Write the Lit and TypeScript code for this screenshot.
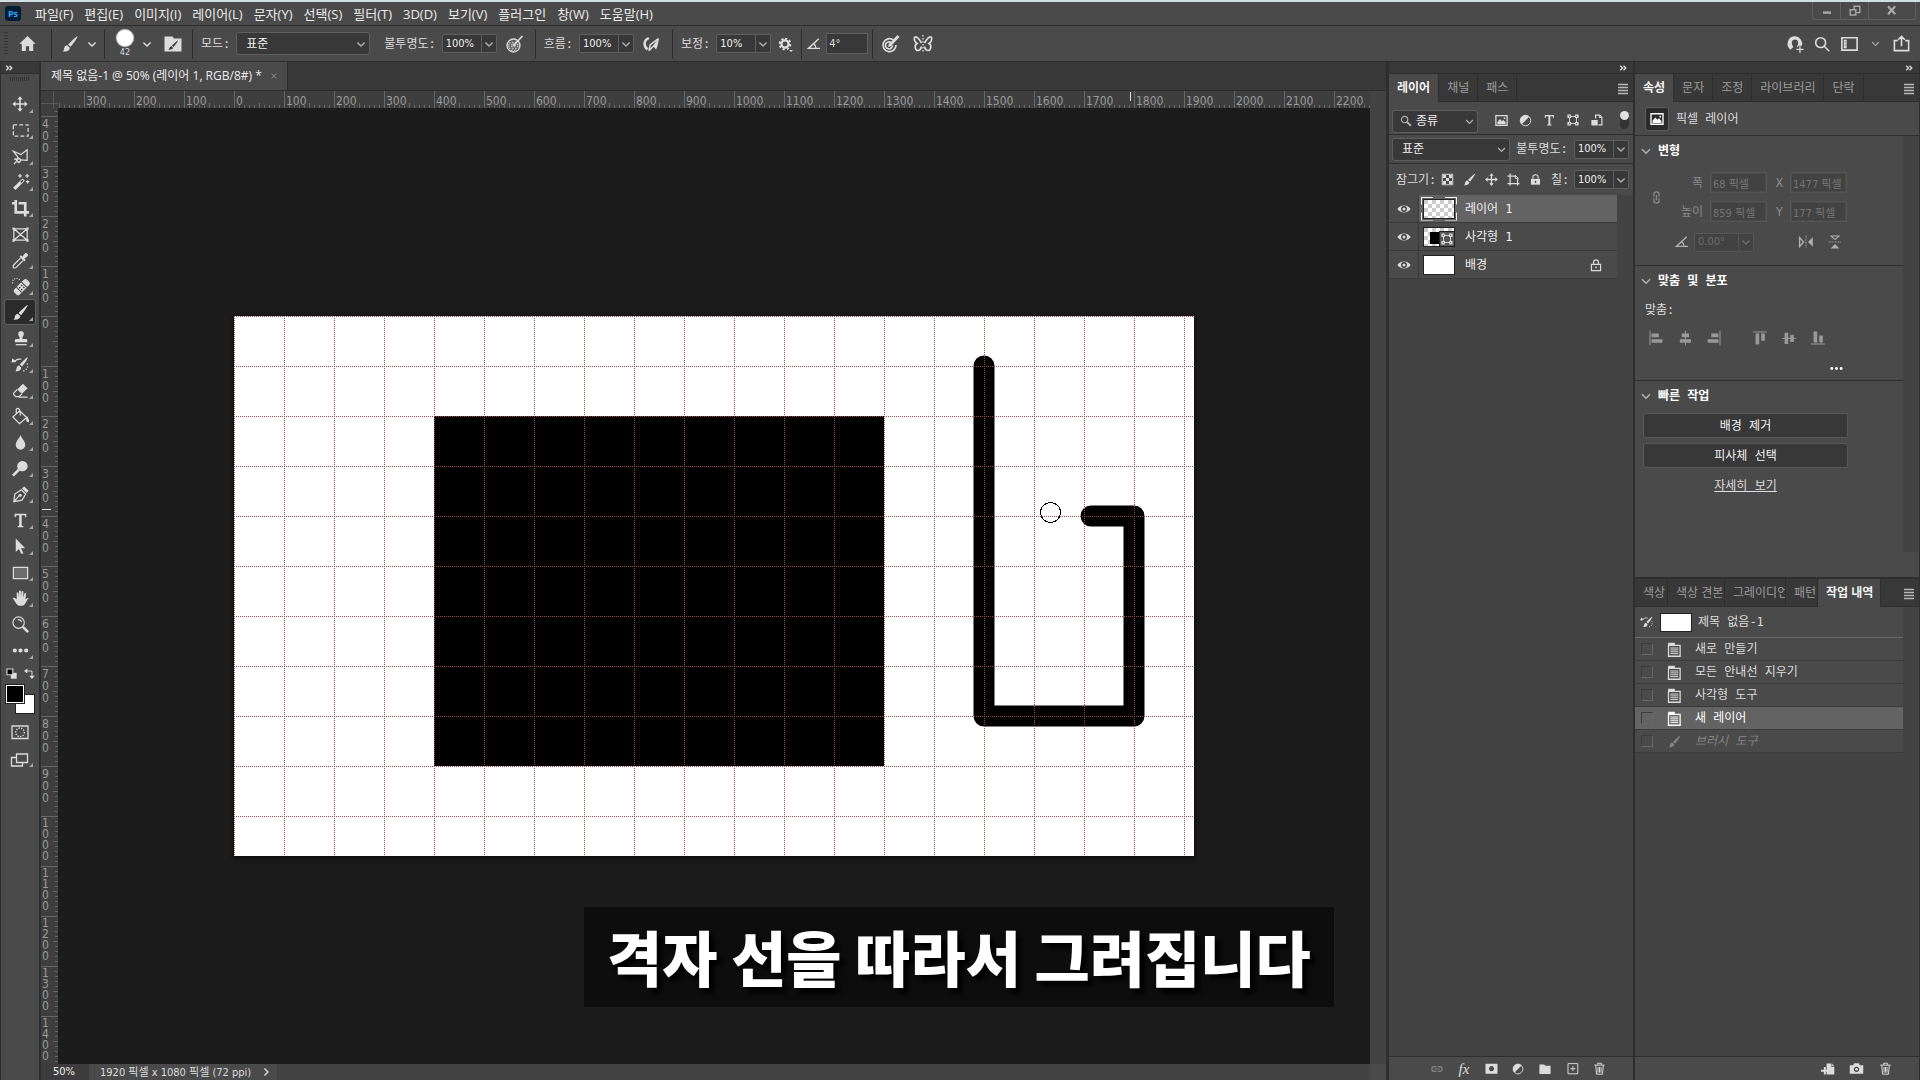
import { LitElement, html, svg, css, nothing, type TemplateResult } from "lit";
import { customElement } from "lit/decorators.js";
import { classMap } from "lit/directives/class-map.js";

/* ---------- icons (20 × 20 grid) ---------- */

const brush = svg`<path d="M17.5 2.2c.6.5-4.6 8.3-7 10.6L8 10.600C10.200 8.200 17 1.700 17.500 2.200z"/><path d="M7.200 11.300l2.500 2.400c.2 2.400-2.400 4.300-7.200 3.800 1.500-.9 1.300-2 1.700-3.600.4-1.600 1.700-2.500 3-2.600z"/>`;
const trash = svg`<path class="l" d="M3 5.500h14M7.500 5V3h5v2M5 6l1 11.500h8L15 6M8 8v7.500M10 8v7.500M12 8v7.500"/>`;
const half = svg`<circle class="l" cx="10" cy="10" r="7"/><path d="M15 5A7 7 0 1 0 5 15z"/>`;
const frame = svg`<path class="l" d="M5 5h10v10H5z"/><path d="M2 2h5v5H2zM13 2h5v5h-5zM2 13h5v5H2zM13 13h5v5h-5z"/><path class="k" d="M4 4h1.500v1.500H4zM14.500 4H16v1.500h-1.500zM4 14.500h1.500V16H4zM14.500 14.500H16V16h-1.500z"/>`;
const picture = svg`<path class="l t" d="M2.500 3.500h15v13h-15z"/><path d="M4.500 15v-3l3.500-4 2.500 3 2-2 3 3.500V15z"/><path d="M13 6h2v2h-2z"/>`;
const angle = svg`<path class="l t" d="M16 3.500L3 15.500h14.500M9.500 9.500c2 1.500 3 3.500 3 6"/>`;

const ICONS: Record<string, TemplateResult> = {
  chev: svg`<path class="l t" d="M5.500 8l4.500 4.500L14.500 8"/>`,
  expand: svg`<path class="l g" d="M4.500 5.500L9 10l-4.500 4.500M11 5.500l4.500 4.500-4.500 4.500"/>`,
  menu: svg`<path class="l" d="M5 6.500h10M5 9.500h10M5 12.500h10M5 15.500h10"/>`,
  home: svg`<path d="M10 2L1.500 10.200H4V18h4.300v-5h3.400v5H16v-7.800h2.500z"/>`,
  brush,
  brushpanel: svg`<path d="M1.500 2.500h8l1.500 2h7.500v13h-17z"/><path class="k" d="M15 6.500c.4.300-2.900 5-4.500 6.500L9 11.700C10.400 10.200 14.700 6.200 15 6.500zM8.500 12.200l1.500 1.400c0 1.600-2 2.500-4.500 2.200 1.300-1.300.7-3.300 3-3.600z"/>`,
  pressop: svg`<circle class="l f" cx="8.500" cy="11.500" r="6.500"/><path class="l c" stroke-dasharray="1.500 1.500" d="M4 8.500h9M3 10.500h11M3 12.500h11M4 14.500h9M6 16.500h5"/><path class="l t" d="M9.500 10.500l8-8.500"/><path d="M7.500 12.500l1-3.500 2.500 2.500z"/>`,
  airbrush: svg`<path class="l g" d="M6.500 3.500C.5 5.500.5 13 5 16"/><path d="M18 3l-7 9 3.500 4c2-3.500 2.500-8 3.500-13z"/><path class="l t" d="M12 12l-5.500 5.500M17 4L8 11l-1.500 6.500"/>`,
  gear: svg`<path class="l g" stroke-dasharray="2.700 2.410" d="M10 3.500a6.500 6.500 0 1 1-.01 0"/><circle class="l g" cx="10" cy="10" r="4.500"/><path d="M15 17.500h5L17.500 20z"/>`,
  angle,
  target: svg`<path class="l t" d="M12.500 6A6.500 6.500 0 1 0 15 11M10 8.500a3.500 3.500 0 1 0 1.500 3"/><path class="l g" d="M9 11l8.500-9"/><path d="M7 13l1-4 3 3z"/>`,
  butterfly: svg`<path class="l" stroke-dasharray="1.500 1.500" d="M10 1v18"/><path class="l t" d="M8.500 9C6 4 3 2 1.500 3.500c-.5 2.500 1 5 2.500 6C1 11 2 16.500 5 16.500c2 0 3-2 3.500-4M11.500 9c2.500-5 5.500-7 7-5.500.5 2.500-1 5-2.500 6 3 1.500 2 7-1 7-2 0-3-2-3.500-4"/>`,
  user: svg`<path d="M10 1.500a8.300 8.300 0 0 0-5 14.900l2.700-2.400c.6-.5.300-1.300-.2-1.900C5.500 9 6.500 5 10 5s4.500 4 2.500 7.100c-.5.600-.8 1.200-.2 1.900L14 12h3.700A8.300 8.300 0 0 0 10 1.500z"/><path class="l" d="M15.500 12v8M11.500 16h8"/>`,
  search: svg`<circle class="l t" cx="8.500" cy="8.500" r="5.500"/><path class="l t" d="M12.500 12.500L18 18"/>`,
  searchb: svg`<circle class="l t" cx="8" cy="8" r="4.500"/><path class="l g" d="M11 11l6 6"/>`,
  workspace: svg`<path class="l t" d="M2 4h16v13H2z"/><path d="M4 6h3v9H4z"/><path class="k" d="M5 8h1v1H5zM5 11h1v1H5z"/>`,
  share: svg`<path class="l t" d="M6 7H2.500v10.500h15V7H14M10 13V2.500M6.500 6L10 2.500 13.500 6"/>`,
  min: svg`<path d="M5 10.500h10v3H5z"/>`,
  restore: svg`<path class="l t" d="M9 8V4h7v8h-4M4 8.500h7V15H4z"/>`,
  close: svg`<path class="l g" d="M5 4l9 10M14 4L5 14"/>`,
  x: svg`<path class="l t" d="M4 4l12 12M16 4L4 16"/>`,
  move: svg`<path class="l t" d="M10 4v12M4 10h12"/><path d="M10 1.500l3 3.500H7zM10 18.500l3-3.500H7zM1.500 10L5 7v6zM18.500 10L15 7v6z"/>`,
  marquee: svg`<path class="l" stroke-dasharray="4 2.300" d="M2.500 4h15.500v12H2.500z"/>`,
  lasso: svg`<path class="l" d="M8.500 12.500L2.500 4.500l8 3.500 6.500-5v11l-7-.5M9 12.500l-5.500.5M3 18l2.500-2.500M9 17l-5-5"/><circle class="l" cx="8" cy="14" r="2"/>`,
  wand: svg`<path d="M2.200 15.500L12 5.700l2.500 2.500L4.700 18z"/><path class="k" d="M9.800 9.300l2.200-2.200 1.100 1.100-2.200 2.200z"/><path class="l" d="M9.500 1v4M7.500 3h4M17 1v4M15 3h4M17.500 7.500v3.500M15.700 9.200h3.500"/>`,
  crop: svg`<path class="l g" d="M5 1v13h10M1 4.500h3M8 4.500h7v14M15.500 14H19"/>`,
  frametool: svg`<path class="l" d="M3 4h14v12H3zM3 4l14 12M17 4L3 16"/><path d="M1.500 2.500h2.500v2.500H1.500zM16 2.500h2.500v2.500H16zM1.500 15h2.500v2.500H1.500zM16 15h2.500v2.500H16z"/>`,
  eyedrop: svg`<path d="M9 6l1.500-1.500L12 6l2.500-3.500c1.500-1.500 4.500 1 3 3L14 8l1.500 1.500L14 11z"/><path class="l" d="M10 7.500L3 14.500c-.8.800-.8 2.800-.5 3.200.4.300 2.200.3 3-.5l7-7"/>`,
  heal: svg`<g transform="rotate(-45 11 11)"><rect x="2" y="7" width="19" height="8" rx="2.500"/><path class="k" d="M7 7h1v8H7zM14.500 7h1v8h-1zM9 9h1.500v1.500H9zM12 9h1.500v1.500H12zM9 12h1.500v1.500H9zM12 12h1.500v1.500H12z"/></g><path class="l" stroke-dasharray="1 1.500" d="M9 3a4 4 0 1 0-6.500 5"/>`,
  stamp: svg`<path d="M10.500 2a3.200 3.200 0 0 1 2.500 5c-1 1.300-1 2-.9 3.500H16c1 0 1.200 1 1.200 3.500H4c0-2.500.2-3.500 1.200-3.500H9c.1-1.500.1-2.200-.9-3.500A3.200 3.200 0 0 1 10.500 2z"/><path class="l" d="M5 16.500h11.500"/>`,
  histbrush: svg`<path d="M17.500 2.500c.6.5-3.600 7.300-6 9.600L9.300 10C11.500 7.500 17 2 17.500 2.500zM8.500 11l2.300 2.200c.2 2.400-2 4.300-6.300 3.800 2-2 1-5.700 4-6z"/><path class="l" d="M3 7.500c3-4 6-3.500 8-3"/><path d="M.5 8l1-4.500 4 3.500z"/><path class="l" stroke-dasharray="1.300 1.700" d="M17 9c1.500 3 0 7-4.500 8"/>`,
  eraser: svg`<path d="M12.500 3l5 4.500-6 6L6.500 9z"/><path class="l" d="M6.500 9L3 12.500c-1 1 0 2 .5 2.500l1.500 1.500h3.500l3-3"/><path class="l" d="M8 17h9.500"/>`,
  bucket: svg`<path class="l" d="M9 4l7.500 7L9 17.500 2 10.500zM5.500 7.500V3c0-2 3-2 3.500 0l1 6"/><path d="M17 10c2 2.500 3 6 1 6s-3-3-1-6z"/>`,
  blur: svg`<path d="M10 2c1.500 4 5 6.500 5 10.500a5 5 0 0 1-10 0C5 8.500 8.500 6 10 2z"/>`,
  dodge: svg`<circle cx="12" cy="7.500" r="5.500"/><path class="l g" d="M2 17.500L8.500 11"/>`,
  pen: svg`<path class="l" d="M3 17.500l1-8L11 5l4.500 4.500-4 6.500zM3 17.500l6-6.500"/><circle cx="9.700" cy="10.700" r="1.600"/><path d="M11.500 3.500L14 1.500l4.500 4.500-2 2.500z"/>`,
  type: svg`<path d="M4 3h13v4h-1.200c0-1.600-.6-2.200-2.300-2.200h-1.600v10.400c0 1 .4 1.300 1.800 1.400V18H7.300v-1.400c1.400-.1 1.800-.4 1.800-1.400V4.800H7.500C5.800 4.800 5.200 5.400 5.200 7H4z"/>`,
  arrow: svg`<path d="M5 1.500v14.300l3.400-3.300 2.400 5.500 2.200-1-2.400-5.200H15z"/>`,
  rect: svg`<path class="l d" d="M2.500 4.500h15v12h-15z"/>`,
  hand: svg`<path d="M6 11V4.500c0-1.300 1.700-1.300 1.900 0L8.500 9V2.500c0-1.400 2-1.400 2 0V9L11 3c.2-1.300 2-1.200 2 .2V9.500l1-4.500c.4-1.200 2-.8 1.800.5C15.500 8 15.700 9 15 11c1-1 2.300-2 3.500-1.500-1.500 2-2.500 4.500-4 6.500-1.500 2-6.500 2.500-8.500 0C4.500 14 3 11.500 1.800 9.500 3.500 8.800 5 10 6 11z"/>`,
  zoom: svg`<circle class="l" cx="8" cy="8" r="6"/><path class="l" d="M7 5c2-.5 3.500.5 4 2.500"/><path class="l g" d="M12.500 12.500L18 18"/>`,
  dots: svg`<circle cx="4" cy="10" r="2.200"/><circle cx="10" cy="10" r="2.200"/><circle cx="16" cy="10" r="2.200"/>`,
  dotss: svg`<circle cx="4.500" cy="10" r="1.700"/><circle cx="10" cy="10" r="1.700"/><circle cx="15.500" cy="10" r="1.700"/>`,
  reset: svg`<path d="M9 9h9v9H9z"/><path class="l t b" d="M3 3h9v9H3z"/>`,
  swap: svg`<path class="l t" d="M5 5.500h9.500V15"/><path d="M0 5.500L6 1v9zM14.500 20L9.500 14h10z"/>`,
  mask: svg`<path class="l" d="M2 4h16v12.500H2z"/><circle class="l" stroke-dasharray="1.300 1.300" cx="10" cy="10.300" r="4.300"/>`,
  screen: svg`<path class="l" d="M6.500 9.500H1.500v8.500h11v-3"/><path class="l" d="M6.500 6h11v8.500h-11z"/>`,
  picture,
  half,
  frame,
  smart: svg`<path class="l t" d="M8 8V3h6l3 3v11h-5"/><path d="M2 10h9v8H2zM13 3l4 4h-4z"/>`,
  checker: svg`<path class="l" d="M3 3h14v14H3z"/><path d="M4 4h4v4H4zM12 4h4v4h-4zM8 8h4v4H8zM4 12h4v4H4zM12 12h4v4h-4z"/>`,
  artboard: svg`<path class="l t" d="M5.500 2v16M2 5.500h11M2 15.500h16M15.500 9v9"/><path class="l" d="M12.500 4.500l4 4h-4z"/>`,
  lock: svg`<path d="M3 9h14v9H3z"/><path class="l t" d="M6 9V6c0-4.500 8-4.500 8 0v3"/><path class="k" d="M9 12h2v3H9z"/>`,
  lockl: svg`<path class="l t" d="M3.500 9h13v9h-13zM6.500 9V6c0-4.500 7-4.500 7 0v3"/><path d="M9 12h2v2.500H9z"/>`,
  eye: svg`<path d="M.5 10C5 3.500 15 3.500 19.500 10 15 16.500 5 16.500.5 10z"/><circle class="k" cx="10" cy="10" r="4.200"/><circle cx="10" cy="10" r="2.200"/>`,
  link: svg`<path class="l t" d="M9 6.500H6c-4.500 0-4.500 7 0 7h3M11 6.500h3c4.500 0 4.500 7 0 7h-3M6.500 10h7"/>`,
  chain: svg`<path class="l t" d="M6.500 9V6c0-4.500 7-4.500 7 0v3M6.500 11v3c0 4.500 7 4.500 7 0v-3M10 6.500v7"/>`,
  addmask: svg`<path fill-rule="evenodd" d="M2 3.500h16V17H2zM10 6.800a3.400 3.400 0 1 0 .01 0z"/>`,
  folder: svg`<path d="M2 3.500h7l1.500 2H18V17H2z"/>`,
  plus: svg`<path class="l" d="M4 3.500h13v13.500H4zM10.500 7v6.500M7.300 10.300h6.500"/>`,
  trash,
  snapdoc: svg`<path d="M8 2h7v5h4v11H8z"/><path d="M16 2l3 4h-3z"/><path class="l g" d="M0 12.500h11M5.500 7v11"/>`,
  camera: svg`<path fill-rule="evenodd" d="M1 5.500h4.500L7 3h6l1.500 2.500H19V17H1zM10 7.500a3.600 3.600 0 1 0 .01 0z"/><circle cx="10" cy="11" r="1.800"/>`,
  doc: svg`<path d="M1.500 1h9v3.500h-9z"/><path class="l t" d="M2 4.500h15.500V19H2z"/><path class="l" d="M4.500 8h10.500M4.500 10.500h10.500M4.500 13h10.500M4.500 15.500h10.500"/>`,
  fliph: svg`<path class="l t" d="M2 4.500v11l5-5.500z"/><path class="l" stroke-dasharray="1 1" d="M10 2v16"/><path d="M18.500 4v12l-6-6z"/>`,
  flipv: svg`<path class="l" d="M5 2.500h10L10 7z"/><path class="l" stroke-dasharray="1 1" d="M2 10h16"/><path d="M4.500 18h11L10 12.500z"/>`,
  al: svg`<path class="l" d="M2.500 1v18"/><path d="M4.500 4.500h9V9h-9zM4.500 11.500H18V16H4.500z"/>`,
  ac: svg`<path class="l" d="M10.500 1v18"/><path d="M6 4.500h9V9H6zM3.500 11.500h14V16h-14z"/>`,
  ar: svg`<path class="l" d="M17.500 1v18"/><path d="M6.500 4.500h9V9h-9zM2 11.500h13.500V16H2z"/>`,
  at: svg`<path class="l" d="M1.500 2.500h17"/><path d="M4.500 4.500H9V18H4.500zM11.500 4.500H16v9h-4.500z"/>`,
  am: svg`<path class="l" d="M1.500 10.500h17"/><path d="M4.500 3.500H9v14H4.500zM11.500 6H16v9h-4.500z"/>`,
  ab: svg`<path class="l" d="M1.500 17.500h17"/><path d="M4.500 2H9v13.500H4.500zM11.500 7H16v8.500h-4.500z"/>`,
};

const icon = (name: string, size = 20) =>
  html`<svg class="ic" width=${size} height=${size} viewBox="0 0 20 20" aria-hidden="true">${ICONS[name]}</svg>`;

/* ---------- styles used by every element ---------- */

const shared = css`
  :host {
    --bg: #4a4a4a;
    --strip: #383838;
    --well: #434343;
    --edge: #2e2e2e;
    --rim: #5e5e5e;
    --ink: #dcdcdc;
    --dim: #9c9c9c;
    --num: "DejaVu Sans Condensed", "Open Sans", sans-serif;
    --ui: "DejaVu Sans Mono", "Noto Sans CJK KR", monospace;
    --menu: "Open Sans", "Noto Sans CJK KR", sans-serif;
    color: var(--ink);
    font: 12px/16px var(--ui);
  }
  :host, * { box-sizing: border-box; }
  button, input, select { font: inherit; color: inherit; margin: 0; }
  button { background: none; border: 0; padding: 0; display: inline-flex; align-items: center; justify-content: center; }
  .ic { display: block; flex: none; fill: currentColor; overflow: visible; }
  .ic .l { fill: none; stroke: currentColor; stroke-width: 1.3; }
  .ic .t { stroke-width: 1.7; }
  .ic .g { stroke-width: 2.8; }
  .ic .k { fill: #3c3c3c; }
  .ic .d { fill: #6c6c6c; }
  .ic .b { fill: #000; }
  .ic .f { fill: #5f5f5f; }
  .ic .c { stroke: #bbb; }
  .pick { display: grid; align-items: center; height: 23px; }
  .pick > * { grid-area: 1 / 1; }
  .pick select { appearance: none; width: 100%; height: 100%; padding: 0 9px; background: var(--strip); border: 1px solid var(--rim); border-radius: 3px; color: #f0f0f0; }
  .pick .ic { justify-self: end; margin-right: 1px; pointer-events: none; color: #b0b0b0; }
  .combo { display: flex; width: 55px; height: 19px; background: var(--strip); border: 1px solid var(--rim); border-radius: 2px; }
  .combo input { flex: 1; min-width: 0; padding: 0 3px; background: none; border: 0; font: 11px/16px var(--num); color: #f0f0f0; }
  .combo button { width: 15px; border-left: 1px solid var(--rim); color: #b0b0b0; overflow: hidden; }
  .tabs { display: flex; height: 28px; background: var(--strip); border-bottom: 1px solid var(--edge); font: 12px/16px var(--menu); }
  .tab { flex: none; padding: 0 8px; border-right: 1px solid var(--edge); color: var(--dim); overflow: hidden; white-space: nowrap; justify-content: flex-start; }
  .tab.on { background: var(--bg); color: #f4f4f4; font-weight: bold; height: 28px; }
  .more { margin-left: auto; color: #b8b8b8; }
  .expander { display: flex; flex: none; align-items: center; justify-content: flex-end; height: 12px; padding-right: 5px; background: var(--strip); border-bottom: 1px solid var(--edge); }
  .foot { display: flex; align-items: center; height: 24px; margin-top: auto; background: var(--bg); border-top: 1px solid var(--edge); }
`;

const combo = (label: string, value: string) => html`
  <span class="combo"><input aria-label=${label} .value=${value} /><button aria-label="${label} 조절">${icon("chev", 16)}</button></span>`;

const tabs = (names: string[], on: string) => html`
  <div class="tabs" role="tablist">
    ${names.map((n) => html`<button role="tab" aria-selected=${n === on} class=${classMap({ tab: true, on: n === on })}>${n}</button>`)}
    <button class="more" aria-label="패널 메뉴">${icon("menu", 20)}</button>
  </div>`;

/* ---------- menu bar ---------- */

@customElement("ps-menubar")
class PsMenubar extends LitElement {
  static styles = [shared, css`
    :host { display: flex; height: 26px; border-top: 2px solid #cfdfe4; border-bottom: 1px solid var(--edge); background: var(--bg); }
    .logo { align-self: center; width: 16px; height: 15px; margin: 0 14px 0 5px; border-radius: 3px; background: #001d34; color: #31a8ff; font: bold 9px/15px var(--menu); text-align: center; }
    nav { display: flex; align-items: center; gap: 11px; font: 13px/20px var(--menu); color: #ececec; }
    .win { display: flex; margin-left: auto; margin-right: 4px; height: 18px; border: 1px solid var(--rim); border-top: 0; border-radius: 0 0 3px 3px; color: #a8a8a8; }
    .win button { width: 28px; border-right: 1px solid var(--rim); }
    .win button:last-child { width: 46px; border: 0; }
  `];
  private items = ["파일(F)", "편집(E)", "이미지(I)", "레이어(L)", "문자(Y)", "선택(S)", "필터(T)", "3D(D)", "보기(V)", "플러그인", "창(W)", "도움말(H)"];
  render() {
    return html`
      <span class="logo">Ps</span>
      <nav>${this.items.map((t) => html`<button>${t}</button>`)}</nav>
      <div class="win">
        <button aria-label="최소화">${icon("min", 16)}</button>
        <button aria-label="이전 크기로">${icon("restore", 16)}</button>
        <button aria-label="닫기">${icon("close", 16)}</button>
      </div>`;
  }
}

/* ---------- option bar ---------- */

@customElement("ps-options")
class PsOptions extends LitElement {
  static styles = [shared, css`
    :host { display: flex; align-items: center; height: 36px; padding-left: 4px; background: var(--bg); border-bottom: 1px solid var(--edge); }
    .grip { width: 4px; height: 24px; background: repeating-linear-gradient(#333 0 1px, transparent 1px 3px); }
    .group { display: flex; align-items: center; gap: 6px; height: 30px; padding: 0 8px; border-right: 1px solid var(--edge); }
    .group.last { gap: 12px; border: 0; }
    .group.home { padding: 0 14px 0 10px; }
    .group.tool { gap: 4px; padding-right: 4px; }
    .group.tip { padding: 0 9px 0 7px; gap: 1px; }
    .set { margin-left: 7px; }
    .round { flex-direction: column; width: 26px; font: 9px/12px var(--num); }
    .round i { width: 16px; height: 16px; border-radius: 8px; background: #fff; box-shadow: 0 0 1px 1px #ddd; }
    .pick { width: 134px; margin-right: 8px; }
    .wider { width: 24px; }
    .deg { width: 42px; height: 21px; padding: 0 2px; background: var(--strip); border: 1px solid var(--rim); font: 11px/16px var(--num); }
    .group.ang { padding: 0 4px; gap: 4px; }
    .right { display: flex; align-items: center; gap: 9px; margin-left: auto; padding-right: 9px; }
    .small { color: #a0a0a0; }
  `];
  render() {
    return html`
      <span class="grip"></span>
      <div class="group home"><button aria-label="홈">${icon("home", 19)}</button></div>
      <div class="group tool"><button aria-label="브러시 도구">${icon("brush", 20)}</button><button aria-label="사전 설정">${icon("chev", 16)}</button></div>
      <div class="group tip">
        <button class="round"><i></i>42</button>
        <button aria-label="브러시 선택">${icon("chev", 16)}</button>
        <button class="set" aria-label="브러시 설정">${icon("brushpanel", 20)}</button>
      </div>
      <div class="group">
        <label for="mode">모드:</label>
        <span class="pick"><select id="mode"><option>표준</option></select>${icon("chev", 16)}</span>
        <span>불투명도:</span>${combo("불투명도", "100%")}
        <button class="wider" aria-label="불투명도 압력">${icon("pressop", 20)}</button>
      </div>
      <div class="group"><span>흐름:</span>${combo("흐름", "100%")}<button class="wider" aria-label="에어브러시">${icon("airbrush", 18)}</button></div>
      <div class="group"><span>보정:</span>${combo("보정", "10%")}<button aria-label="보정 옵션">${icon("gear", 16)}</button></div>
      <div class="group ang">${icon("angle", 16)}<input class="deg" aria-label="각도" .value=${"4°"} /></div>
      <div class="group last">
        <button aria-label="크기 압력">${icon("target", 20)}</button>
        <button aria-label="대칭">${icon("butterfly", 20)}</button>
      </div>
      <div class="right">
        <button aria-label="계정">${icon("user", 18)}</button>
        <button aria-label="검색">${icon("search", 18)}</button>
        <button aria-label="작업 영역">${icon("workspace", 19)}</button>
        <button class="small" aria-label="작업 영역 선택">${icon("chev", 15)}</button>
        <button aria-label="공유">${icon("share", 19)}</button>
      </div>`;
  }
}

/* ---------- tool column ---------- */

const TOOLS: [string, string][] = [
  ["move", "이동"], ["marquee", "사각형 선택"], ["lasso", "다각형 올가미"], ["wand", "자동 선택"], ["crop", "자르기"],
  ["frametool", "프레임"], ["eyedrop", "스포이드"], ["heal", "스팟 복구"], ["brush", "브러시"], ["stamp", "복제 도장"],
  ["histbrush", "작업 내역 브러시"], ["eraser", "지우개"], ["bucket", "페인트 통"], ["blur", "흐림 효과"], ["dodge", "닷지"],
  ["pen", "펜"], ["type", "수평 문자"], ["arrow", "패스 선택"], ["rect", "사각형"], ["hand", "손"], ["zoom", "돋보기"], ["dots", "도구 모음 편집"],
];

@customElement("ps-tools")
class PsTools extends LitElement {
  static styles = [shared, css`
    :host { display: flex; flex-direction: column; align-items: center; width: 41px; background: var(--bg); border-left: 1px solid var(--edge); border-right: 2px solid var(--edge); }
    .expander { align-self: stretch; justify-content: flex-start; padding-left: 3px; }
    .grip { width: 20px; height: 4px; margin: 3px 0 10px; background: repeating-linear-gradient(90deg, #333 0 1px, transparent 1px 2px); }
    .tool { position: relative; width: 32px; height: 26px; border: 1px solid transparent; border-radius: 3px; }
    .tool.on { background: #2b2b2b; border-color: #616161; }
    .tool.sub::after { content: ""; position: absolute; right: 2px; bottom: 3px; border: 2px solid transparent; border-right-color: #a8a8a8; border-bottom-color: #a8a8a8; }
    .mini { display: flex; gap: 6px; margin: 4px 0 4px; }
    .swatches { position: relative; width: 30px; height: 30px; margin-bottom: 5px; }
    .swatches button { position: absolute; width: 20px; height: 20px; border: 1px solid #222; }
    .back { right: 0; top: 10px; background: #fff; }
    .fore { left: 0; top: 0; background: #000; box-shadow: inset 0 0 0 1px #fff; }
  `];
  render() {
    return html`
      <div class="expander">${icon("expand", 10)}</div>
      <span class="grip"></span>
      ${TOOLS.map(([id, name]) => html`
        <button aria-label=${name} class=${classMap({ tool: true, sub: id !== "frametool" && id !== "zoom", on: id === "brush" })}>${icon(id, id === "move" || id === "type" ? 18 : 19)}</button>`)}
      <div class="mini"><button aria-label="기본 색상">${icon("reset", 13)}</button><button aria-label="색상 교체">${icon("swap", 11)}</button></div>
      <div class="swatches"><button class="back" aria-label="배경색"></button><button class="fore" aria-label="전경색"></button></div>
      <button class="tool" aria-label="빠른 마스크">${icon("mask", 20)}</button>
      <button class="tool sub" aria-label="화면 모드">${icon("screen", 20)}</button>`;
  }
}

/* ---------- document window ---------- */

@customElement("ps-document")
class PsDocument extends LitElement {
  static styles = [shared, css`
    :host { display: grid; grid-template-rows: 29px 17px minmax(0, 1fr) 16px; min-width: 0; min-height: 0; background: var(--well); border-right: 2px solid var(--edge); }
    .titles { display: flex; background: var(--strip); border-bottom: 1px solid var(--edge); }
    .title { display: flex; align-items: center; gap: 8px; padding: 0 9px 0 10px; background: var(--bg); border-right: 1px solid var(--edge); font: 12px/18px var(--menu); color: #ececec; }
    .title button { color: #a8a8a8; }
    .body { display: grid; grid-template-columns: 17px minmax(0, 1fr) 16px; min-height: 0; }
    .top { display: grid; grid-template-columns: 17px minmax(0, 1fr) 16px; background: var(--well); }
    .corner { background: linear-gradient(#5a5a5a, #5a5a5a) 12px 0 / 1px 100% no-repeat, linear-gradient(#5a5a5a, #5a5a5a) 0 12px / 100% 1px no-repeat, #3e3e3e; }
    .rule { position: relative; display: flex; overflow: hidden; background: #3e3e3e; color: #9a9a9a; font: 12px/12px var(--num); }
    .h .cell { flex: none; width: 50px; height: 17px; padding: 4px 0 0 1px; border-left: 1px solid #666;
      background: linear-gradient(#666, #666) 24px 100% / 1px 5px no-repeat, repeating-linear-gradient(90deg, transparent 0 4px, #666 4px 5px) 0 100% / 100% 3px no-repeat; }
    .h .run { display: flex; margin-left: -24px; }
    .v .run { margin-top: -42px; width: 17px; }
    .v .cell { height: 50px; padding: 1px 0 0 1px; border-top: 1px solid #666;
      background: linear-gradient(#666, #666) 100% 24px / 5px 1px no-repeat, repeating-linear-gradient(transparent 0 4px, #666 4px 5px) 100% 0 / 3px 100% no-repeat; }
    .v .cell span { display: block; }
    .v .cell.long { line-height: 11px; }
    .mark { position: absolute; background: #e0e0e0; }
    .mh { left: 1072px; top: 1px; width: 1px; height: 9px; }
    .mv { left: 1px; top: 401px; width: 9px; height: 1px; }
    .view { position: relative; display: grid; place-items: center; overflow: hidden; background: #1c1c1c; }
    .art { display: block; background: #fff; box-shadow: 0 2px 5px 1px #0c0c0c; overflow: visible; }
    .caption { position: absolute; left: 526px; bottom: 57px; margin: 0; padding: 0 23px; height: 100px; background: #0d0d0d; color: #fff; font: 900 60px/98px "Noto Sans CJK KR", sans-serif; text-shadow: 5px 5px 5px #000; white-space: nowrap; }
    .status { display: flex; font: 11px/16px var(--num); }
    .status input { width: 48px; padding: 0 12px; border: 0; background: #3c3c3c; color: #f0f0f0; font-size: 11px; }
    .status button { gap: 7px; padding: 0 3px 0 11px; background: var(--bg); font: 11px/15px "DejaVu Sans Condensed", "Noto Sans CJK KR", sans-serif; }
    .status .ic { transform: rotate(-90deg); }
    .status .end { margin-left: auto; width: 16px; background: var(--bg); }
  `];
  private artwork() {
    const cols = Array.from({ length: 20 }, (_, i) => i * 50 + 0.5);
    const rows = Array.from({ length: 11 }, (_, i) => i * 50 + 0.5);
    return html`
      <svg class="art" width="960" height="540" viewBox="0 0 960 540" role="img" aria-label="레이어 1">
        <rect x="200" y="100" width="450" height="350" fill="#000" />
        <path d="M750 50V400H900V200H857" fill="none" stroke="#000" stroke-width="21" stroke-linejoin="round" stroke-linecap="round" />
        <g stroke="#a04a4a" stroke-dasharray="1 1" shape-rendering="crispEdges">
          ${cols.map((x) => svg`<path d="M${x} 0V540"/>`)}
          ${rows.map((y) => svg`<path d="M0 ${y}H960"/>`)}
        </g>
        <circle cx="816.5" cy="196.5" r="10" fill="none" stroke="#000" shape-rendering="crispEdges" />
      </svg>`;
  }
  render() {
    const hs = Array.from({ length: 27 }, (_, i) => Math.abs(i - 4) * 100);
    const vs = Array.from({ length: 20 }, (_, i) => Math.abs(i - 5) * 100);
    return html`
      <div class="titles"><div class="title"><span>제목 없음-1 @ 50% (레이어 1, RGB/8#) *</span><button aria-label="문서 닫기">${icon("x", 8)}</button></div></div>
      <div class="top">
        <span class="corner"></span>
        <div class="rule h"><div class="run">${hs.map((n, i) => html`<div class="cell">${i ? n : nothing}</div>`)}</div><i class="mark mh"></i></div>
      </div>
      <div class="body">
        <div class="rule v"><div class="run">${vs.map((n, i) => html`<div class=${classMap({ cell: true, long: n > 999 })}>${i ? [...String(n)].map((c) => html`<span>${c}</span>`) : nothing}</div>`)}</div><i class="mark mv"></i></div>
        <div class="view">${this.artwork()}<p class="caption">격자 선을 따라서 그려집니다</p></div>
      </div>
      <div class="status"><input aria-label="확대/축소" .value=${"50%"} /><button>1920 픽셀 x 1080 픽셀 (72 ppi)${icon("chev", 16)}</button><span class="end"></span></div>`;
  }
}

/* ---------- layers panel ---------- */

@customElement("ps-layers")
class PsLayers extends LitElement {
  static styles = [shared, css`
    :host { display: flex; flex-direction: column; width: 247px; background: var(--bg); border-left: 1px solid var(--edge); border-right: 2px solid var(--edge); }
    .row { display: flex; align-items: center; padding: 0 4px 0 3px; border-bottom: 1px solid var(--edge); }
    .filter { height: 33px; }
    .filter .pick { width: 86px; margin: 6px 11px 0 0; }
    .filter .pick select { padding-left: 23px; }
    .filter .pick .lead { justify-self: start; margin-left: 7px; color: #fff; pointer-events: none; }
    .filter button { width: 24px; margin-top: 4px; }
    .filter .switch { width: 9px; height: 18px; margin-left: auto; border-radius: 5px; background: #333; align-items: flex-start; }
    .switch::before { content: ""; width: 9px; height: 9px; border-radius: 5px; background: #e0e0e0; }
    .blend { height: 29px; justify-content: space-between; }
    .blend .pick { width: 118px; }
    .locks { height: 31px; border: 0; padding-left: 7px; }
    .locks button { width: 22px; }
    .locks .combo { margin-left: auto; }
    .locks .combo button { width: 15px; }
    .locks .fill { margin-left: auto; }
    .list { flex: 1; padding-right: 16px; background: var(--well); }
    ul { margin: 0; padding: 0; list-style: none; }
    li { display: flex; align-items: center; height: 28px; background: var(--bg); border-bottom: 1px solid #3a3a3a; }
    li .see { width: 30px; height: 27px; border-right: 1px solid #3a3a3a; }
    li .name { display: flex; align-items: center; flex: 1; height: 27px; padding: 0 14px 0 4px; }
    li.on .name { background: #636363; }
    li .text { flex: 1; padding-left: 10px; color: #f0f0f0; }
    .thumb { position: relative; display: flex; width: 32px; height: 20px; border: 1px solid #222; background: #fff; }
    .clear { background: repeating-conic-gradient(#fff 0 25%, #ccc 0 50%) 0 0 / 8px 8px; }
    .box i { width: 10px; height: 12px; margin: 4px 0 0 6px; background: #000; }
    .box .ic { background: #555; outline: 1px solid #222; margin-top: 4px; }
    .sel::after { content: ""; position: absolute; inset: -3px; border: 1px solid #f0f0f0; clip-path: polygon(0 0, 12px 0, 12px 100%, 24px 100%, 24px 0, 100% 0, 100% 8px, 0 8px, 0 16px, 100% 16px, 100% 100%, 0 100%); }
    .foot { padding: 0 24px 0 38px; justify-content: space-between; }
    .foot button { width: 20px; }
    .foot .off { color: #858585; }
    .fx { font: italic 15px/20px "Liberation Serif", serif; }
  `];
  render() {
    return html`
      <div class="expander">${icon("expand", 10)}</div>
      ${tabs(["레이어", "채널", "패스"], "레이어")}
      <div class="row filter">
        <span class="pick"><select aria-label="종류"><option>종류</option></select><span class="lead">${icon("searchb", 14)}</span>${icon("chev", 15)}</span>
        <button aria-label="픽셀">${icon("picture", 15)}</button><button aria-label="조정">${icon("half", 15)}</button>
        <button aria-label="문자">${icon("type", 14)}</button><button aria-label="모양">${icon("frame", 14)}</button>
        <button aria-label="고급 개체">${icon("smart", 14)}</button><button class="switch" aria-label="필터 켜기"></button>
      </div>
      <div class="row blend">
        <span class="pick"><select aria-label="혼합 모드"><option>표준</option></select>${icon("chev", 15)}</span>
        <span>불투명도:</span>${combo("불투명도", "100%")}
      </div>
      <div class="row locks">
        <span>잠그기:</span>
        <button aria-label="투명 픽셀">${icon("checker", 15)}</button><button aria-label="이미지 픽셀">${icon("brush", 15)}</button>
        <button aria-label="위치">${icon("move", 15)}</button><button aria-label="대지">${icon("artboard", 15)}</button>
        <button aria-label="모두">${icon("lock", 13)}</button>
        <span class="fill">칠:</span>${combo("칠", "100%")}
      </div>
      <div class="list"><ul>
        <li class="on"><button class="see" aria-label="가시성">${icon("eye", 14)}</button><div class="name"><span class="thumb clear sel"></span><span class="text">레이어 1</span></div></li>
        <li><button class="see" aria-label="가시성">${icon("eye", 14)}</button><div class="name"><span class="thumb clear box"><i></i>${icon("frame", 14)}</span><span class="text">사각형 1</span></div></li>
        <li><button class="see" aria-label="가시성">${icon("eye", 14)}</button><div class="name"><span class="thumb"></span><span class="text">배경</span>${icon("lockl", 14)}</div></li>
      </ul></div>
      <div class="foot">
        <button class="off" aria-label="연결">${icon("link", 14)}</button><button class="fx">fx</button>
        <button aria-label="마스크">${icon("addmask", 15)}</button><button aria-label="조정 레이어">${icon("half", 14)}</button>
        <button aria-label="그룹">${icon("folder", 14)}</button><button aria-label="새 레이어">${icon("plus", 15)}</button>
        <button aria-label="삭제">${icon("trash", 15)}</button>
      </div>`;
  }
}

/* ---------- properties and history ---------- */

@customElement("ps-side")
class PsSide extends LitElement {
  static styles = [shared, css`
    :host { display: flex; flex-direction: column; width: 285px; background: var(--bg); border-right: 1px solid var(--edge); }
    .kind { display: flex; align-items: center; gap: 7px; height: 34px; padding-left: 10px; border-bottom: 1px solid var(--edge); }
    .kind .box { padding: 3px; border: 1px solid var(--rim); border-radius: 3px; background: #2b2b2b; color: #fff; }
    .props { height: 441px; padding-right: 16px; background: linear-gradient(var(--well), var(--well)) 100% 0 / 16px 416px no-repeat; }
    section { border-bottom: 1px solid var(--edge); }
    section.quick { border: 0; }
    h3 { display: flex; align-items: center; gap: 3px; margin: 0; padding: 6px 0 0 2px; font: bold 12px/16px var(--ui); color: #fff; }
    h3 .ic { color: #b0b0b0; }
    .xform { height: 130px; }
    .fields { display: grid; grid-template-columns: 42px 33px 57px 23px 57px; align-items: center; row-gap: 8px; margin-top: 12px; color: #8a8a8a; }
    .fields .ic { grid-row: 1 / 3; justify-self: center; }
    .fields label { padding-right: 7px; text-align: right; white-space: nowrap; justify-self: end; }
    .fields input { width: 100%; height: 21px; padding: 0 5px 0 2px; border: 1px solid #555; background: #424242; color: #767676; font: 11px/16px "DejaVu Sans Condensed", "Noto Sans CJK KR", sans-serif; box-shadow: inset 0 0 0 1px #4a4a4a; }
    .turn { display: flex; align-items: center; height: 20px; margin-top: 10px; padding-left: 39px; color: #b0b0b0; }
    .turn .combo { width: 60px; margin: 0 43px 0 4px; border-color: #555; background: #424242; }
    .turn .combo input, .turn .combo button { color: #6c6c6c; border-color: #555; }
    .turn > button { width: 18px; margin-right: 11px; }
    .alignsec { height: 115px; }
    .sub { margin: 12px 0 0 10px; }
    .aligns { display: flex; gap: 13px; margin: 12px 0 0 13px; color: #999; }
    .aligns button:nth-child(4) { margin-left: 17px; }
    .etc { display: flex; margin: 14px 0 0 193px; color: #fff; }
    .wide { display: flex; width: 205px; height: 25px; margin: 8px 0 0 8px; border: 1px solid #585858; border-radius: 3px; background: var(--strip); color: #f4f4f4; }
    .wide + .wide { margin-top: 5px; }
    .learn { display: block; width: 205px; margin: 10px 0 0 8px; text-align: center; color: inherit; }
    .hist .tab:nth-child(1) { width: 33px; }
    .hist .tab:nth-child(2) { width: 57px; }
    .hist .tab:nth-child(3) { width: 61px; }
    .hist .tab:nth-child(4) { width: 32px; }
    .hist .tab { padding-right: 0; }
    .hist .tab.on { width: 63px; }
    .hist { border-top: 2px solid var(--edge); }
    .log { flex: 1; padding-right: 16px; background: var(--well); }
    .snap { display: flex; align-items: center; gap: 6px; height: 31px; padding-left: 5px; border-bottom: 1px solid #6a6a6a; background: var(--bg); }
    .snap i { width: 32px; height: 19px; border: 1px solid #222; background: #fff; }
    ol { margin: 0; padding: 0; list-style: none; }
    li { display: flex; align-items: center; height: 23px; padding-left: 6px; background: var(--bg); border-bottom: 1px solid #3a3a3a; }
    li input { appearance: none; width: 12px; height: 12px; margin: 0; border: 1px solid #3c3c3c; border-right-color: #666; border-bottom-color: #666; }
    li .ic { margin: 0 13px 0 14px; }
    li.on { background: #636363; color: #fff; }
    li.undone { color: #868686; font-style: italic; }
    .foot { justify-content: flex-end; gap: 14px; padding-right: 26px; }
  `];
  private log: [string, string, string][] = [
    ["새로 만들기", "doc", ""], ["모든 안내선 지우기", "doc", ""], ["사각형 도구", "doc", ""], ["새 레이어", "doc", "on"], ["브러시 도구", "brush", "undone"],
  ];
  render() {
    return html`
      <div class="expander">${icon("expand", 10)}</div>
      ${tabs(["속성", "문자", "조정", "라이브러리", "단락"], "속성")}
      <div class="kind"><span class="box">${icon("picture", 16)}</span><span>픽셀 레이어</span></div>
      <div class="props">
        <section class="xform">
          <h3>${icon("chev", 18)}변형</h3>
          <div class="fields">
            ${icon("chain", 15)}
            <label for="w">폭</label><input id="w" disabled .value=${"68 픽셀"} /><label for="x">X</label><input id="x" disabled .value=${"1477 픽셀"} />
            <label for="h">높이</label><input id="h" disabled .value=${"859 픽셀"} /><label for="y">Y</label><input id="y" disabled .value=${"177 픽셀"} />
          </div>
          <div class="turn">${icon("angle", 16)}${combo("회전", "0.00°")}<button aria-label="가로로 뒤집기">${icon("fliph", 16)}</button><button aria-label="세로로 뒤집기">${icon("flipv", 16)}</button></div>
        </section>
        <section class="alignsec">
          <h3>${icon("chev", 18)}맞춤 및 분포</h3>
          <p class="sub">맞춤:</p>
          <div class="aligns">${[["al", "왼쪽"], ["ac", "가운데"], ["ar", "오른쪽"], ["at", "위쪽"], ["am", "중간"], ["ab", "아래쪽"]].map(([n, t]) => html`<button aria-label=${t}>${icon(n, 16)}</button>`)}</div>
          <button class="etc" aria-label="추가 옵션">${icon("dotss", 17)}</button>
        </section>
        <section class="quick">
          <h3>${icon("chev", 18)}빠른 작업</h3>
          <button class="wide">배경 제거</button>
          <button class="wide">피사체 선택</button>
          <a class="learn" href="#learn">자세히 보기</a>
        </section>
      </div>
      <div class="hist">${tabs(["색상", "색상 견본", "그레이디언트", "패턴", "작업 내역"], "작업 내역")}</div>
      <div class="log">
        <div class="snap">${icon("histbrush", 14)}<i></i><span>제목 없음-1</span></div>
        <ol>${this.log.map(([name, ic, state]) => html`<li class=${state || nothing}><input type="checkbox" aria-label=${name} />${icon(ic, 15)}<span>${name}</span></li>`)}</ol>
      </div>
      <div class="foot">
        <button aria-label="새 문서">${icon("snapdoc", 14)}</button><button aria-label="스냅샷">${icon("camera", 15)}</button><button aria-label="삭제">${icon("trash", 15)}</button>
      </div>`;
  }
}

@customElement("app-root")
class AppRoot extends LitElement {
  static styles = css`
    :host { display: grid; grid-template-rows: auto auto minmax(0, 1fr); height: 100vh; overflow: hidden; background: #4a4a4a; }
    main { display: grid; grid-template-columns: auto minmax(0, 1fr) auto auto; min-height: 0; }
  `;
  render() {
    return html`
      <ps-menubar></ps-menubar>
      <ps-options></ps-options>
      <main><ps-tools></ps-tools><ps-document></ps-document><ps-layers></ps-layers><ps-side></ps-side></main>`;
  }
}
